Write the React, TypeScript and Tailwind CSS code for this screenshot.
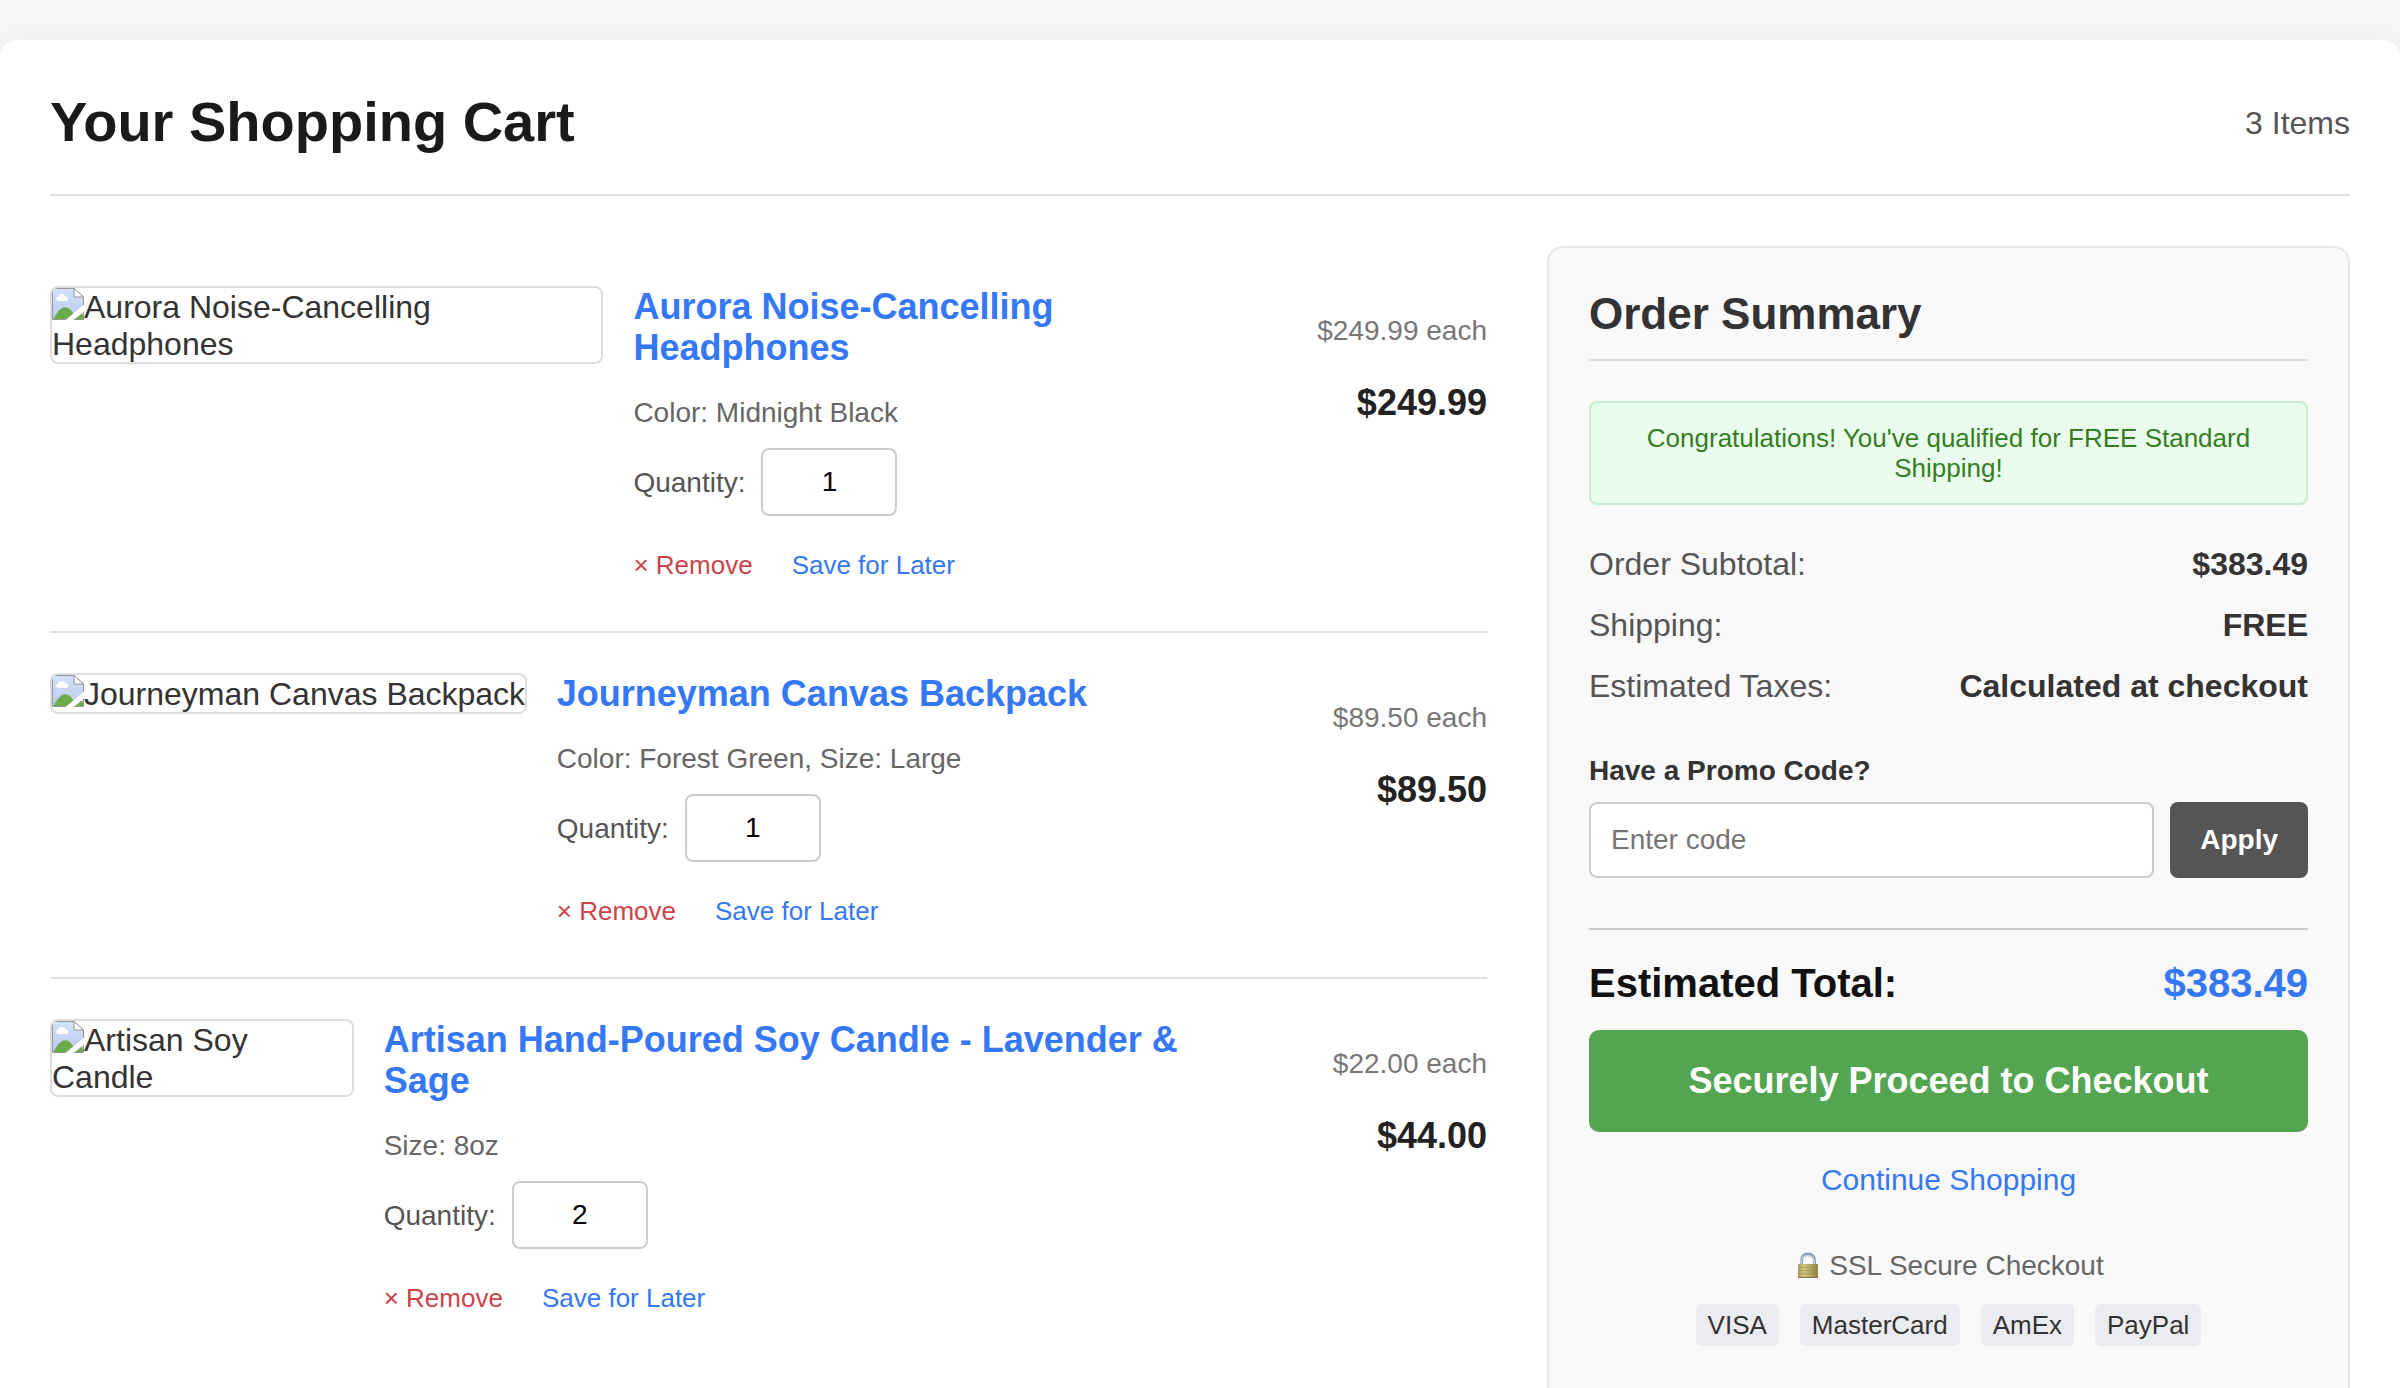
import { useState } from "react";

type Item = {
  alt: string;
  boxClass: string;
  nameClass: string;
  name: string;
  options: string;
  quantity: number;
  each: string;
  total: string;
};

const items: Item[] = [
  {
    alt: "Aurora Noise-Cancelling Headphones",
    boxClass: "h-[78px] w-[553.4px]",
    nameClass: "max-w-[500px]",
    name: "Aurora Noise-Cancelling Headphones",
    options: "Color: Midnight Black",
    quantity: 1,
    each: "$249.99 each",
    total: "$249.99",
  },
  {
    alt: "Journeyman Canvas Backpack",
    boxClass: "h-[41px] w-[476.8px] whitespace-nowrap",
    nameClass: "max-w-[810px]",
    name: "Journeyman Canvas Backpack",
    options: "Color: Forest Green, Size: Large",
    quantity: 1,
    each: "$89.50 each",
    total: "$89.50",
  },
  {
    alt: "Artisan Soy Candle",
    boxClass: "h-[78px] w-[303.7px]",
    nameClass: "max-w-[810px]",
    name: "Artisan Hand-Poured Soy Candle - Lavender & Sage",
    options: "Size: 8oz",
    quantity: 2,
    each: "$22.00 each",
    total: "$44.00",
  },
];

function MissingImageIcon() {
  return (
    <svg viewBox="0 0 32 32" className="-mt-[5px] inline-block size-8 align-[-2px]" aria-hidden="true">
      <defs>
        <linearGradient id="sky" x1="0" y1="0" x2="0" y2="1">
          <stop offset="0" stopColor="#d3e1f8" />
          <stop offset="1" stopColor="#b9c9ee" />
        </linearGradient>
      </defs>
      <path d="M.5.5H22L31.500 9V31.500H.5Z" fill="url(#sky)" stroke="#959595" />
      <path d="M22 .5V9H31.500Z" fill="#fff" stroke="#959595" />
      <path d="M5.500 13a2.500 2.500 0 0 1 .6-4.600 3.800 3.800 0 0 1 7.200-.2 2.600 2.600 0 0 1 1.700 4.800Z" fill="#fff" />
      <path d="M1.500 31C5 24 9 19.200 13 19.200C18 19.200 21 24 24 31Z" fill="#6cab49" />
      <path d="M23 31L29.500 25.500L31 28V31Z" fill="#6cab49" />
      <path d="M13.500 32L32 16.500V23.500L21.500 32Z" fill="#fff" />
    </svg>
  );
}

function LockIcon() {
  return (
    <svg viewBox="0 0 28 28" className="size-7" aria-hidden="true">
      <defs>
        <linearGradient id="brass" x1="0" y1="0" x2="1" y2="0">
          <stop offset="0" stopColor="#a89d57" />
          <stop offset=".3" stopColor="#cfc580" />
          <stop offset=".6" stopColor="#b3a962" />
          <stop offset="1" stopColor="#8b803e" />
        </linearGradient>
      </defs>
      <path d="M8.500 13V8.500a6.500 6.500 0 0 1 13 0V13" fill="none" stroke="#8f9dab" strokeWidth="3.200" />
      <path d="M8.200 13V8.500a6.800 6.800 0 0 1 13 0V13" fill="none" stroke="#c3d3e6" strokeWidth="1.600" />
      <rect x="5" y="12" width="20" height="14" rx="1" fill="url(#brass)" />
      <path d="M5 15.500H25M5 18.500H25M5 21.500H25" stroke="#8f8546" strokeOpacity=".35" />
      <path d="M5 25.500H25" stroke="#877c3d" />
    </svg>
  );
}

function CartItem({ item, last }: { item: Item; last: boolean }) {
  const [quantity, setQuantity] = useState(String(item.quantity));
  return (
    <article className={last ? "flex items-start py-10" : "flex items-start border-b-2 border-[#e0e0e0] py-10"}>
      <div className={`${item.boxClass} shrink-0 overflow-hidden rounded-lg border-2 border-[#ddd] pt-px leading-[37px]`}>
        <MissingImageIcon />
        {item.alt}
      </div>
      <div className="ml-[30px] min-w-0 flex-1">
        <h3 className={`${item.nameClass} text-[36px] leading-[41px] font-bold text-[#3478f6]`}>{item.name}</h3>
        <p className="mt-[29px] text-[28px] leading-8 text-[#666]">{item.options}</p>
        <div className="mt-[19px] flex items-center text-[28px] leading-8 text-[#555]">
          <label className="pt-0.5">Quantity:</label>
          <input
            value={quantity}
            onChange={(e) => setQuantity(e.target.value)}
            className="ml-4 h-[68px] w-[136px] rounded-lg border-2 border-[#ccc] bg-white text-center text-black outline-none"
          />
        </div>
        <div className="mt-[34px] mb-[11px] flex gap-[39px] text-[26px] leading-[30px]">
          <button className="text-[#cb444a]">× Remove</button>
          <button className="text-[#3478f6]">Save for Later</button>
        </div>
      </div>
      <div className="shrink-0 pt-[29px] text-right">
        <p className="text-[28px] leading-8 text-[#777]">{item.each}</p>
        <p className="mt-[35px] text-[36px] leading-[41px] font-bold text-[#222]">{item.total}</p>
      </div>
    </article>
  );
}

const rows = [
  ["Order Subtotal:", "$383.49"],
  ["Shipping:", "FREE"],
  ["Estimated Taxes:", "Calculated at checkout"],
];

function Summary() {
  return (
    <aside className="h-[1240px] w-[803px] shrink-0 rounded-2xl border-2 border-[#e8e8e8] bg-[#f9f9f9] p-10">
      <h2 className="border-b-2 border-[#ddd] pb-5 text-[44px] leading-[51px] font-bold text-[#333]">Order Summary</h2>
      <div className="mt-10 rounded-lg border-2 border-[#c6efce] bg-[#eafdec] p-5 text-center text-[26px] leading-[30px] text-[#357d22]">
        Congratulations! You've qualified for FREE Standard Shipping!
      </div>
      <dl className="mt-[41px] flex flex-col gap-6 leading-[37px]">
        {rows.map(([label, value]) => (
          <div key={label} className="flex justify-between">
            <dt className="text-[#555]">{label}</dt>
            <dd className="font-bold text-[#333]">{value}</dd>
          </div>
        ))}
      </dl>
      <div className="mt-[50px] text-[28px] leading-8">
        <label className="block font-bold text-[#333]">Have a Promo Code?</label>
        <div className="mt-[15px] flex gap-4">
          <input
            placeholder="Enter code"
            className="h-[76px] min-w-0 flex-1 rounded-lg border-2 border-[#ccc] bg-white px-5 outline-none placeholder:text-[#757575]"
          />
          <button className="rounded-lg bg-[#555] px-[30px] font-bold text-white">Apply</button>
        </div>
      </div>
      <div className="mt-[50px] flex justify-between border-t-2 border-[#ccc] pt-[30px] text-[40px] leading-[46px] font-bold">
        <span className="text-[#111]">Estimated Total:</span>
        <span className="text-[#3478f6]">$383.49</span>
      </div>
      <button className="mt-6 h-[102px] w-full rounded-[10px] bg-[#54a551] pb-px text-[36px] leading-[41px] font-bold text-white">
        Securely Proceed to Checkout
      </button>
      <div className="mt-[30px] text-center text-[30px] leading-[35px]">
        <a className="text-[#3478f6]">Continue Shopping</a>
      </div>
      <div className="mt-[53px] flex items-center justify-center gap-2 text-[28px] leading-8 text-[#666]">
        <LockIcon />
        <span>SSL Secure Checkout</span>
      </div>
      <div className="mt-[22px] flex justify-center gap-[21px] text-[26px] leading-[30px] text-[#333]">
        {["VISA", "MasterCard", "AmEx", "PayPal"].map((name) => (
          <span key={name} className="rounded-md bg-[#ebecf0] px-3 py-1.5">
            {name}
          </span>
        ))}
      </div>
    </aside>
  );
}

export default function App() {
  return (
    <div className="h-[1388px] overflow-hidden bg-[#f4f6f8] pt-10 font-['Liberation_Sans',Arial,sans-serif] text-[32px] text-[#333]">
      <main className="h-[1500px] rounded-2xl bg-white px-[50px] pt-[50px] shadow-[0_4px_30px_rgba(0,0,0,0.05)]">
        <header className="flex items-center justify-between border-b-2 border-[#e0e0e0] pb-10">
          <h1 className="text-[56px] leading-[64px] font-bold text-[#1a1a1a]">Your Shopping Cart</h1>
          <span className="pt-0.5 leading-[37px] text-[#555]">3 Items</span>
        </header>
        <div className="mt-[50px] flex gap-[60px]">
          <section className="min-w-0 flex-1">
            {items.map((item, i) => (
              <CartItem key={item.name} item={item} last={i === items.length - 1} />
            ))}
          </section>
          <Summary />
        </div>
      </main>
    </div>
  );
}
